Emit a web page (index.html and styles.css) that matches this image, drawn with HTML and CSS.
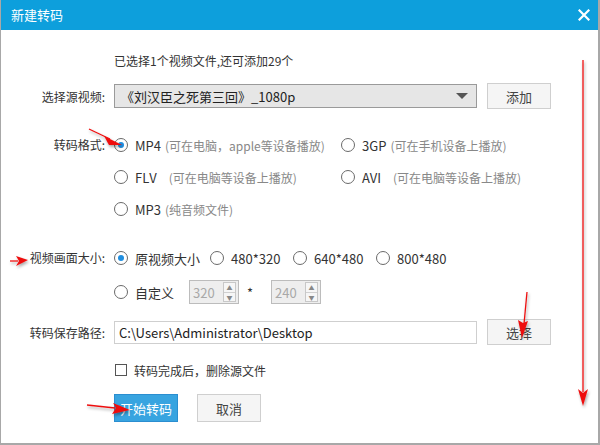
FILE: index.html
```html
<!DOCTYPE html>
<html lang="zh">
<head>
<meta charset="utf-8">
<title>新建转码</title>
<link rel="stylesheet" href="styles.css">
</head>
<body>
<div class="dialog">
  <div class="titlebar">
    <span class="title">新建转码</span>
    <svg class="close" width="12" height="12" viewBox="0 0 12 12"><path d="M1.5 1.5 L10.5 10.5 M10.5 1.5 L1.5 10.5" stroke="#fff" stroke-width="2.2" stroke-linecap="square"/></svg>
  </div>
  <div class="body">
    <div class="row info"><span class="label"></span><span class="text">已选择1个视频文件,还可添加29个</span></div>

    <div class="row source">
      <span class="label">选择源视频:</span>
      <div class="combo"><span>《刘汉臣之死第三回》_1080p</span><span class="caret"></span></div>
      <button class="btn">添加</button>
    </div>

    <div class="group format">
      <span class="label">转码格式:</span>
      <div class="fgrid">
        <label class="opt"><span class="radio on"></span><b>MP4</b><i>(可在电脑，apple等设备播放)</i></label>
        <label class="opt"><span class="radio"></span><b>3GP</b><i>(可在手机设备上播放)</i></label>
        <label class="opt"><span class="radio"></span><b>FLV</b><i>(可在电脑等设备上播放)</i></label>
        <label class="opt"><span class="radio"></span><b>AVI</b><i>(可在电脑等设备上播放)</i></label>
        <label class="opt"><span class="radio"></span><b>MP3</b><i class="tight">(纯音频文件)</i></label>
      </div>
    </div>

    <div class="group size">
      <span class="label">视频画面大小:</span>
      <div class="srows">
        <div class="srow">
          <label class="opt w96"><span class="radio on"></span><b>原视频大小</b></label>
          <label class="opt w83"><span class="radio"></span><b>480*320</b></label>
          <label class="opt w83"><span class="radio"></span><b>640*480</b></label>
          <label class="opt"><span class="radio"></span><b>800*480</b></label>
        </div>
        <div class="srow">
          <label class="opt w75"><span class="radio"></span><b>自定义</b></label>
          <div class="spin"><span>320</span><span class="step"><em>▲</em><em>▼</em></span></div>
          <span class="star">*</span>
          <div class="spin"><span>240</span><span class="step"><em>▲</em><em>▼</em></span></div>
        </div>
      </div>
    </div>

    <div class="row path">
      <span class="label">转码保存路径:</span>
      <div class="input">C:\Users\Administrator\Desktop</div>
      <button class="btn">选择</button>
    </div>

    <div class="row check">
      <span class="label"></span>
      <span class="box"></span><span class="ctext">转码完成后，删除源文件</span>
    </div>

    <div class="row actions">
      <span class="label"></span>
      <button class="btn primary">开始转码</button>
      <button class="btn cancel">取消</button>
    </div>
  </div>

  <svg class="annot" width="600" height="445" viewBox="0 0 600 445">
    <defs>
      <filter id="sh" x="-50%" y="-50%" width="200%" height="200%">
        <feDropShadow dx="1" dy="2" stdDeviation="1.5" flood-color="#000" flood-opacity="0.35"/>
      </filter>
    </defs>
    <g fill="#ee1111" stroke="#ee1111" filter="url(#sh)">
      <line x1="89" y1="129" x2="110" y2="139" stroke-width="1.3"/>
      <polygon points="122,145 104,136 109,145" stroke="none"/>
      <line x1="10" y1="261" x2="18" y2="261" stroke-width="1.3"/>
      <polygon points="28,260 16,256 19,261 16,266" stroke="none"/>
      <line x1="583" y1="60" x2="583" y2="392" stroke-width="1.3"/>
      <polygon points="583,406 578,389 583,393 588,389" stroke="none"/>
      <line x1="527" y1="292" x2="524" y2="324" stroke-width="1.3"/>
      <polygon points="522,338 518,320 523,323 528,321" stroke="none"/>
      <line x1="87" y1="405" x2="115" y2="408" stroke-width="1.3"/>
      <polygon points="130,410 113,403 116,408 112,414" stroke="none"/>
    </g>
  </svg>
</div>
</body>
</html>
```

FILE: styles.css
```css
* { box-sizing: border-box; }
html, body { margin: 0; padding: 0; background: #fff; }
body {
  font-family: "Noto Sans CJK SC", "Noto Sans", "DejaVu Sans", sans-serif;
  font-size: 12px;
  color: #333;
}
.dialog {
  position: relative;
  width: 600px;
  height: 445px;
  border-left: 1px solid #a8a8a8;
  border-right: 2px solid #a8a8a8;
  border-bottom: 2px solid #a8a8a8;
  background: #fff;
  overflow: hidden;
}
.titlebar {
  height: 30px;
  margin-left: -1px;
  margin-right: -2px;
  background: #0d9fdc;
  display: flex;
  align-items: center;
  justify-content: space-between;
  padding: 0 10px 0 11px;
  color: #fff;
}
.title { font-size: 13px; line-height: 30px; }
.close { display: block; }

.body { display: flex; flex-direction: column; }
.label {
  width: 104px;
  flex: 0 0 104px;
  text-align: right;
  margin-right: 9px;
  color: #333;
  white-space: nowrap;
}
.row { display: flex; align-items: center; }
.info { margin-top: 20px; height: 20px; }
.info .text { color: #333; }

.source { margin-top: 13px; height: 26px; }
.combo {
  width: 363px;
  height: 24px;
  background: #e6e6e6;
  border: 1px solid #9a9a9a;
  display: flex;
  align-items: center;
  justify-content: space-between;
  padding: 0 8px 0 6px;
  font-size: 13px;
  color: #222;
}
.caret {
  width: 0; height: 0;
  border-left: 6px solid transparent;
  border-right: 6px solid transparent;
  border-top: 6px solid #555;
}
.btn {
  font-family: inherit;
  font-size: 13px;
  width: 64px;
  height: 26px;
  margin-left: 10px;
  background: #f5f5f5;
  border: 1px solid #cfcfcf;
  color: #444;
  padding: 0;
}

.group { display: flex; align-items: flex-start; }
.group .label { line-height: 32px; }
.format { margin-top: 20px; }
.fgrid {
  display: grid;
  grid-template-columns: 227px auto;
  grid-auto-rows: 32px;
}
.opt { display: flex; align-items: center; white-space: nowrap; height: 32px; }
.opt b { font-weight: normal; color: #333; font-size: 13px; margin-left: 7px; }
.opt i { font-style: normal; color: #888; margin-left: 4px; }
.fgrid .opt:nth-child(3) i, .fgrid .opt:nth-child(4) i { margin-left: 12px; }
.radio {
  width: 14px; height: 14px;
  border: 1px solid #6a6a6a;
  border-radius: 50%;
  display: inline-flex;
  align-items: center;
  justify-content: center;
  flex: 0 0 14px;
  background: #fff;
}
.radio.on::after {
  content: "";
  width: 6px; height: 6px;
  border-radius: 50%;
  background: #1f8ee0;
}

.size { margin-top: 16px; }
.size .label { line-height: 34px; }
.srows { display: flex; flex-direction: column; }
.srow { display: flex; align-items: center; height: 34px; }
.srow .opt { height: 34px; }
.w96 { width: 96px; }
.w83 { width: 83px; }
.w75 { width: 75px; }
.spin {
  width: 50px; height: 24px;
  background: #eee;
  border: 1px solid #bcbcbc;
  display: flex;
  align-items: center;
  justify-content: space-between;
  padding-left: 3px;
  color: #a8a8a8;
  font-size: 13px;
}
.step {
  width: 13px; height: 20px;
  margin-right: 2px;
  border: 1px solid #c8c8c8;
  display: flex; flex-direction: column;
  background: #f6f6f6;
}
.step em {
  font-style: normal;
  font-size: 6px;
  line-height: 9px;
  height: 9px;
  text-align: center;
  color: #888;
}
.step em + em { border-top: 1px solid #d0d0d0; }
.star { width: 32px; padding-right: 10px; text-align: center; color: #333; font-size: 13px; }

.path { margin-top: 10px; height: 26px; }
.input {
  width: 363px; height: 23px;
  border: 1px solid #cfcfcf;
  padding-left: 4px;
  display: flex; align-items: center;
  font-size: 13px;
  color: #222;
}

.check { margin-top: 15px; height: 20px; }
.box {
  width: 12px; height: 12px;
  border: 1px solid #555;
  margin-left: 1px;
  background: #fff;
}
.ctext { margin-left: 7px; color: #333; }

.actions { margin-top: 14px; height: 28px; }
.actions .btn { height: 28px; }
.primary {
  margin-left: 0;
  background: #38a4e0;
  border: 1px solid #2b8ed0;
  color: #fff;
}
.cancel { margin-left: 19px; }

.annot { position: absolute; left: -1px; top: 0; pointer-events: none; }
```
